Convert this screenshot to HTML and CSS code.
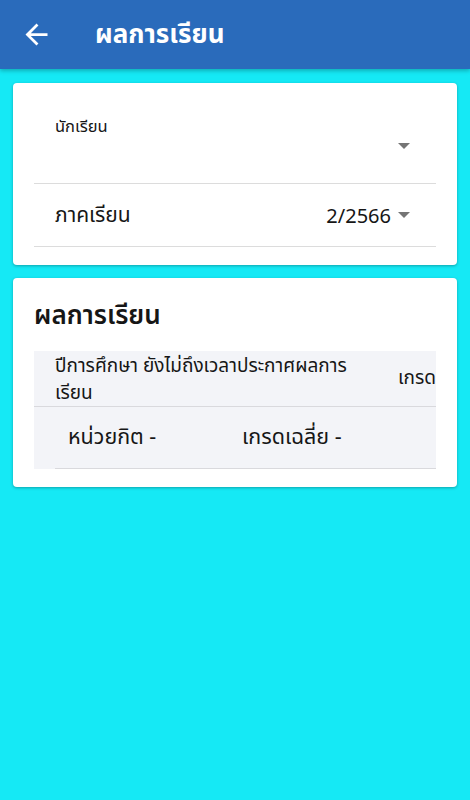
FILE: index.html
```html
<!DOCTYPE html>
<html lang="th">
<head>
<meta charset="utf-8">
<link rel="stylesheet" href="styles.css">
</head>
<body>
<header class="appbar">
  <svg class="back" viewBox="0 0 24 24" width="33" height="33"><path d="M20 11H7.83l5.59-5.59L12 4l-8 8 8 8 1.41-1.41L7.83 13H20v-2z" fill="#fff"/></svg>
  <h1 class="title">ผลการเรียน</h1>
</header>
<main class="content">
  <section class="card">
    <div class="field field-student">
      <div class="field-label">นักเรียน</div>
      <div class="field-row">
        <span class="field-value"></span>
        <span class="caret"></span>
      </div>
    </div>
    <div class="field field-term">
      <span class="term-label">ภาคเรียน</span>
      <span class="term-value">2/2566</span>
      <span class="caret"></span>
    </div>
  </section>
  <section class="card card-results">
    <h2 class="card-title">ผลการเรียน</h2>
    <div class="table">
      <div class="thead">
        <div class="th-year">ปีการศึกษา ยังไม่ถึงเวลาประกาศผลการเรียน</div>
        <div class="th-grade">เกรด</div>
      </div>
      <div class="summary">
        <span class="credit">หน่วยกิต -</span>
        <span class="gpa">เกรดเฉลี่ย -</span>
      </div>
    </div>
  </section>
</main>
</body>
</html>
```
FILE: styles.css
```css
* { box-sizing: border-box; }
html, body { margin: 0; padding: 0; }
body {
  width: 470px;
  min-height: 800px;
  background: #15e9f5;
  font-family: "Noto Sans", "Noto Sans Thai", sans-serif;
  color: #161616;
}
.appbar {
  height: 69px;
  background: #2a6bbb;
  display: flex;
  align-items: center;
  padding-left: 20px;
  box-shadow: 0 2px 4px rgba(0,0,0,0.25);
}
.back { display: block; }
.title {
  margin: 0 0 0 42px;
  color: #fff;
  font-size: 26px;
  font-weight: 700;
}
.content {
  padding: 14px 13px;
  display: flex;
  flex-direction: column;
  gap: 13px;
}
.card {
  background: #fff;
  border-radius: 4px;
  box-shadow: 0 1px 3px rgba(0,0,0,0.3);
  padding: 0 21px 18px;
}
.field {
  border-bottom: 1px solid #dcdcdc;
}
.field-student {
  height: 101px;
  padding: 32px 26px 0 21px;
}
.field-label {
  font-size: 16.5px;
  line-height: 22px;
}
.field-row {
  display: flex;
  justify-content: flex-end;
  align-items: center;
  height: 20px;
  margin-top: -1px;
}
.caret {
  width: 0;
  height: 0;
  border-left: 6.5px solid transparent;
  border-right: 6.5px solid transparent;
  border-top: 6.5px solid #757575;
}
.field-term {
  height: 63px;
  display: flex;
  align-items: center;
  padding: 0 26px 0 21px;
  font-size: 21px;
}
.term-label { flex: 1; }
.term-value { margin-right: 7px; font-size: 20px; }
.card-results { padding-top: 17px; }
.card-title {
  margin: 0;
  font-size: 26px;
  font-weight: 600;
  line-height: 38px;
  height: 56px;
}
.table {
  background: #f3f4f8;
}
.thead {
  display: flex;
  align-items: center;
  height: 56px;
  border-bottom: 1px solid #d9d9dd;
  padding-left: 21px;
  overflow: hidden;
  font-size: 19px;
}
.th-year {
  width: 300px;
  line-height: 27px;
  flex: none;
}
.th-grade {
  margin-left: 43px;
  white-space: nowrap;
}
.summary {
  margin-left: 21px;
  height: 62px;
  display: flex;
  align-items: center;
  border-bottom: 1px solid #d9d9dd;
  font-size: 21.5px;
}
.credit { margin-left: 13px; width: 174px; }
```
